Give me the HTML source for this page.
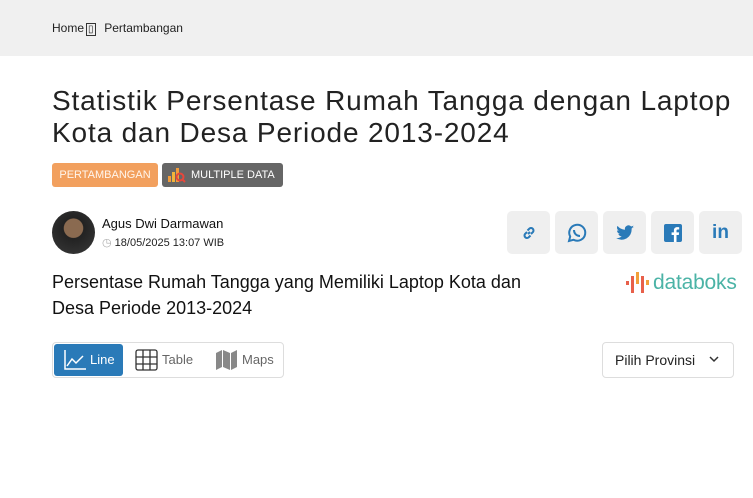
<!DOCTYPE html>
<html><head><meta charset="utf-8"><style>
*{margin:0;padding:0;box-sizing:border-box}
body{width:753px;height:498px;background:#fff;font-family:"Liberation Sans",sans-serif;color:#111;position:relative;overflow:hidden}
.top{position:absolute;left:0;top:0;width:753px;height:56px;background:#f0f0f0}
.bc{position:absolute;left:52px;top:21px;font-size:12px;color:#222}
h1{position:absolute;left:52px;top:85px;font-size:28px;font-weight:400;line-height:32px;color:#222;letter-spacing:0.85px;width:701px}
.tag{position:absolute;top:163px;height:24px;border-radius:3px;color:#fff;font-size:11px;line-height:24px}
.t1{left:52px;width:106px;background:#f2a05e;text-align:center;color:#fff5ec}
.t2{left:162px;width:121px;background:#666;padding-left:29px;font-size:11px}
.av{position:absolute;left:52px;top:211px;width:43px;height:43px;border-radius:50%;background:radial-gradient(circle at 50% 40%,#8a6a50 0 28%,#222 30%,#3a3a3a 100%)}
.name{position:absolute;left:102px;top:216px;font-size:13px;color:#111}
.date{position:absolute;left:102px;top:236px;font-size:11px;color:#222}
.sb{position:absolute;top:211px;width:43px;height:43px;background:#efefef;border-radius:5px;display:flex;align-items:center;justify-content:center}
h2{position:absolute;left:52px;top:269px;font-size:18px;font-weight:400;line-height:26px;color:#111;width:500px}
.logo{position:absolute;left:626px;top:271px;font-size:21px;color:#4bb3a6;padding-left:27px;letter-spacing:-0.2px}
.tabs{position:absolute;left:52px;top:342px;width:232px;height:36px;border:1px solid #ddd;border-radius:4px}
.line{position:absolute;left:1px;top:1px;width:69px;height:32px;background:#2a7ab8;border-radius:3px;color:#fff;font-size:13px;line-height:32px;padding-left:36px}
.tl{position:absolute;top:9px;font-size:13px;color:#666}
.sel{position:absolute;left:602px;top:342px;width:132px;height:36px;border:1px solid #ddd;border-radius:4px;font-size:14px;line-height:34px;padding-left:12px;color:#222}
</style></head><body>
<div class="top"></div>
<div class="bc">Home<span style="font-size:10px;border:1px solid #333;margin:0 2px;padding:0 1px">▯</span>&nbsp;&nbsp;Pertambangan</div>
<h1>Statistik Persentase Rumah Tangga dengan Laptop Kota dan Desa Periode 2013-2024</h1>
<div class="tag t1">PERTAMBANGAN</div>
<div class="tag t2"><svg style="position:absolute;left:6px;top:4px" width="18" height="16"><rect x="0" y="9" width="3" height="6" fill="#f29c3a"/><rect x="4" y="5" width="3" height="10" fill="#f2b43a"/><rect x="8" y="1" width="3" height="14" fill="#f29c3a"/><circle cx="12" cy="10" r="3.5" fill="none" stroke="#e8463a" stroke-width="2"/><line x1="14" y1="12" x2="17" y2="15" stroke="#e8463a" stroke-width="2"/></svg>MULTIPLE DATA</div>
<div class="av"></div>
<div class="name">Agus Dwi Darmawan</div>
<div class="date"><span style="color:#aaa">◷</span> 18/05/2025 13:07 WIB</div>
<div class="sb" style="left:507px"><svg width="16" height="16" fill="none" stroke="#2a7ab8" stroke-width="2"><path d="M7 9l2-2M6 7L4 9a2.5 2.5 0 003.5 3.5L9.5 10.5M10 9l2-2a2.5 2.5 0 00-3.5-3.5L6.5 5.5"/></svg></div>
<div class="sb" style="left:555px"><svg width="22" height="22" fill="none" stroke="#2a7ab8" stroke-width="2"><path d="M3 19l1.2-4.5a8 8 0 113.3 3.3z"/><path d="M8 8c0 3.5 2.5 6 6 6" stroke-width="2"/></svg></div>
<div class="sb" style="left:603px"><svg width="18" height="16"><path fill="#2a7ab8" d="M18 2c-.7.3-1.4.5-2 .6.7-.5 1.3-1.2 1.5-2-.7.4-1.5.7-2.3.9A3.6 3.6 0 009 4.7 10 10 0 011.5.9a3.6 3.6 0 001.1 4.8c-.6 0-1.2-.2-1.6-.5 0 1.8 1.2 3.3 2.9 3.6-.5.2-1.1.2-1.6.1.5 1.5 1.900 2.500 3.400 2.500A7.300 7.300 0 010 13a10 10 0 0015.6-9V3.5C16.3 3 17.4 2.6 18 2z"/></svg></div>
<div class="sb" style="left:651px"><svg width="18" height="18"><rect width="18" height="18" rx="2" fill="#2a7ab8"/><path fill="#fff" d="M12.5 18v-7h2.3l.3-2.6h-2.6V6.8c0-.8.2-1.3 1.3-1.3h1.4V3.2c-.3 0-1.1-.1-2-.1-2 0-3.3 1.2-3.3 3.4v1.9H7.6V11h2.3v7z"/></svg></div>
<div class="sb" style="left:699px"><span style="color:#2a7ab8;font-weight:700;font-size:19px;font-family:'Liberation Sans'">in</span></div>
<h2>Persentase Rumah Tangga yang Memiliki Laptop Kota dan Desa Periode 2013-2024</h2>
<div class="logo"><svg style="position:absolute;left:0;top:1px" width="24" height="24"><rect x="0" y="9" width="3" height="4" fill="#e8604a"/><rect x="5" y="4" width="3" height="17" fill="#e8604a"/><rect x="10" y="0" width="3" height="12" fill="#f2a03a"/><rect x="15" y="4" width="3" height="17" fill="#e8604a"/><rect x="20" y="8" width="3" height="5" fill="#f2a03a"/></svg>databoks</div>
<div class="tabs">
<div class="line"><svg style="position:absolute;left:10px;top:6px" width="22" height="20" fill="none" stroke="#fff" stroke-width="1.5"><path d="M1 0v19h21M3 16l5-7 4 4 7-7"/></svg>Line</div>
<svg style="position:absolute;left:82px;top:6px" width="23" height="22" fill="none" stroke="#333" stroke-width="1.3"><rect x="1" y="1" width="21" height="20" rx="2"/><path d="M8 1v20M15 1v20M1 8h21M1 15h21"/></svg>
<div class="tl" style="left:109px">Table</div>
<svg style="position:absolute;left:163px;top:7px" width="22" height="20"><path fill="#888" d="M0 3l6-3v17l-6 3zM7 0l7 3v17l-7-3zM15 3l6-3v17l-6 3z"/></svg>
<div class="tl" style="left:189px">Maps</div>
</div>
<div class="sel">Pilih Provinsi <svg style="position:absolute;right:14px;top:13px" width="10" height="7" fill="none" stroke="#333" stroke-width="1.5"><path d="M1 1l4 4 4-4"/></svg></div>
</body></html>
